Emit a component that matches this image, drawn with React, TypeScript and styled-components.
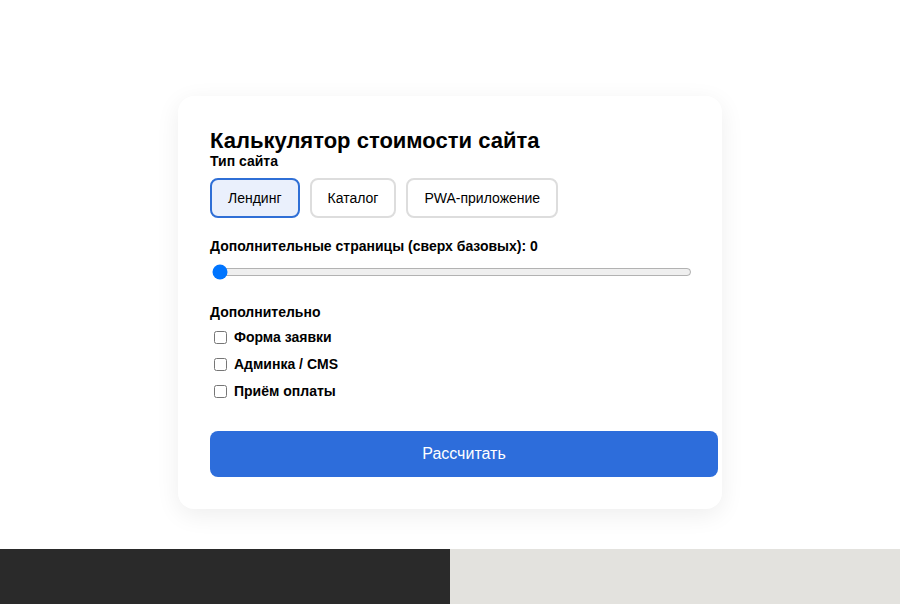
import React, { useState } from 'react';
import styled, { createGlobalStyle, css } from 'styled-components';

const GlobalStyle = createGlobalStyle`
  html, body {
    margin: 0;
    padding: 0;
    background: #fff;
    font-family: "Liberation Sans", Arial, sans-serif;
    color: #000;
  }
`;

const Page = styled.div`
  display: flex;
  flex-direction: column;
  min-height: 604px;
`;

const Main = styled.main`
  display: flex;
  justify-content: center;
  padding: 96px 0 40px;
`;

const Card = styled.div`
  width: 480px;
  padding: 32px;
  background: #fff;
  border-radius: 16px;
  box-shadow: 0 6px 24px rgba(0, 0, 0, 0.07);
`;

const Title = styled.h2`
  margin: 0;
  font-size: 22px;
  font-weight: 700;
  line-height: 25px;
`;

const Label = styled.div<{ $gap?: number }>`
  font-size: 14px;
  font-weight: 700;
  line-height: 16px;
  margin-top: ${(p) => p.$gap ?? 0}px;
`;

const TypeRow = styled.div`
  display: flex;
  gap: 10px;
  margin-top: 9px;
`;

const TypeButton = styled.button<{ $active?: boolean }>`
  padding: 10px 16px;
  font-family: inherit;
  font-size: 14px;
  line-height: 16px;
  color: #000;
  background: #fff;
  border: 2px solid #ddd;
  border-radius: 8px;
  cursor: pointer;

  ${(p) =>
    p.$active &&
    css`
      background: #eaf0fc;
      border-color: #2f6fd6;
    `}
`;

const Range = styled.input`
  display: block;
  width: 100%;
  margin: 10px 0 0 2px;
  accent-color: #0075ff;
`;

const Options = styled.div`
  display: flex;
  flex-direction: column;
  gap: 9px;
  margin-top: 8px;
`;

const Option = styled.label`
  display: flex;
  align-items: center;
  gap: 4px;
  font-size: 14px;
  font-weight: 700;
  line-height: 18px;
  cursor: pointer;

  input {
    margin: 0 3px 0 4px;
  }
`;

const Submit = styled.button`
  display: block;
  width: 100%;
  box-sizing: content-box;
  margin-top: 31px;
  padding: 14px;
  font-family: inherit;
  font-size: 16px;
  line-height: 18px;
  color: #fff;
  background: #2d6ddb;
  border: none;
  border-radius: 8px;
  cursor: pointer;
`;

const Footer = styled.footer`
  display: flex;
  height: 55px;
  margin-top: auto;
`;

const FooterHalf = styled.div<{ $dark?: boolean }>`
  flex: 1;
  background: ${(p) => (p.$dark ? '#2a2a2a' : '#e3e2de')};
`;

const types = ['Лендинг', 'Каталог', 'PWA-приложение'];
const extras = ['Форма заявки', 'Админка / CMS', 'Приём оплаты'];

export default function App() {
  const [type, setType] = useState(0);
  const [pages, setPages] = useState(0);
  const [checked, setChecked] = useState<boolean[]>([false, false, false]);

  return (
    <Page>
      <GlobalStyle />
      <Main>
        <Card>
          <Title>Калькулятор стоимости сайта</Title>
          <Label>Тип сайта</Label>
          <TypeRow>
            {types.map((t, i) => (
              <TypeButton key={t} $active={i === type} onClick={() => setType(i)}>
                {t}
              </TypeButton>
            ))}
          </TypeRow>
          <Label $gap={20}>Дополнительные страницы (сверх базовых): {pages}</Label>
          <Range
            type="range"
            min={0}
            max={20}
            value={pages}
            onChange={(e) => setPages(Number(e.target.value))}
          />
          <Label $gap={24}>Дополнительно</Label>
          <Options>
            {extras.map((x, i) => (
              <Option key={x}>
                <input
                  type="checkbox"
                  checked={checked[i]}
                  onChange={() => setChecked(checked.map((c, j) => (j === i ? !c : c)))}
                />
                {x}
              </Option>
            ))}
          </Options>
          <Submit>Рассчитать</Submit>
        </Card>
      </Main>
      <Footer>
        <FooterHalf $dark />
        <FooterHalf />
      </Footer>
    </Page>
  );
}
